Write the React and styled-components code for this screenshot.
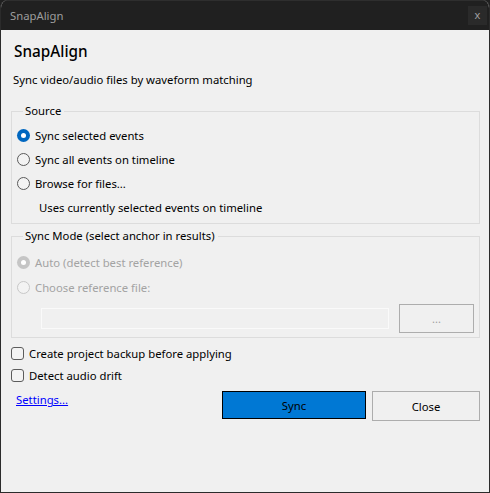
import React from 'react'
import styled, {createGlobalStyle} from 'styled-components'

const Global = createGlobalStyle`
    html, body {
        margin: 0;
        padding: 0;
        background: #202020;
    }
    * {
        box-sizing: border-box;
    }
`

const font = `"Noto Sans", "Open Sans", sans-serif`

const Window = styled.div`
    width: 490px;
    height: 493px;
    display: flex;
    flex-direction: column;
    background: #f0f0f0;
    border: 1px solid #2b2b2b;
    border-top: none;
    border-radius: 8px 8px 0 0;
    overflow: hidden;
    font-family: ${font};
    font-size: 11.3px;
    color: #000;
`

const TitleBar = styled.div`
    height: 30px;
    flex: none;
    display: flex;
    align-items: center;
    justify-content: space-between;
    padding: 0 1px 0 9px;
    background: #202020;
    border-top: 1px solid #2e2e2e;
    color: #9d9d9d;
    font-size: 11.3px;
`

const CloseBox = styled.div`
    width: 19px;
    height: 19px;
    margin-right: 1px;
    display: flex;
    align-items: center;
    justify-content: center;
    background: #2a2a2a;
    color: #a0a0a0;
    font-size: 11px;
    line-height: 1;
    padding-bottom: 2px;
`

const Body = styled.div`
    flex: 1;
    display: flex;
    flex-direction: column;
    padding: 0 9px 0 10px;
`

const Heading = styled.h1`
    margin: 11px 0 0 3px;
    font-size: 15.3px;
    line-height: 20px;
    font-weight: 500;
`

const Subtitle = styled.p`
    margin: 11px 0 0 2px;
    line-height: 16px;
`

const Group = styled.fieldset`
    margin: ${({top}) => top}px 0 0;
    padding: ${({pad}) => pad};
    min-width: 0;
    border: 1px solid #dcdcdc;
    display: flex;
    flex-direction: column;
`

const Legend = styled.legend`
    margin-left: 6px;
    padding: 0 3px 0 2px;
    line-height: 16px;
`

const Option = styled.label`
    height: ${({h}) => h || 24}px;
    display: flex;
    align-items: center;
    gap: 5px;
    color: ${({disabled}) => disabled ? '#a3a3a3' : '#000'};
`

const Radio = styled.span`
    width: 13px;
    height: 13px;
    flex: none;
    border-radius: 50%;
    display: flex;
    align-items: center;
    justify-content: center;
    border: ${({checked, disabled}) =>
        checked ? 'none' : `1px solid ${disabled ? '#c8c8c8' : '#5a5a5a'}`};
    background: ${({checked, disabled}) =>
        checked ? (disabled ? '#c5c5c5' : '#0067c0') : '#f3f3f3'};

    &::after {
        content: '';
        display: ${({checked}) => checked ? 'block' : 'none'};
        width: 5px;
        height: 5px;
        border-radius: 50%;
        background: #fff;
    }
`

const Hint = styled.div`
    margin: 5px 0 0 22px;
    line-height: 16px;
`

const BrowseRow = styled.div`
    margin-top: 4px;
    display: flex;
    align-items: center;
    gap: 10px;
`

const PathField = styled.div`
    flex: 1;
    height: 21px;
    margin-left: 24px;
    border: 1px solid #fafafa;
    background: #f0f0f0;
`

const BrowseButton = styled.div`
    width: 75px;
    height: 29px;
    display: flex;
    align-items: center;
    justify-content: center;
    border: 1px solid #adadad;
    color: #a0a0a0;
    font-size: 11px;
`

const Checks = styled.div`
    margin-top: 4px;
    display: flex;
    flex-direction: column;
`

const CheckRow = styled.label`
    height: 22px;
    display: flex;
    align-items: center;
    gap: 5px;
`

const Checkbox = styled.span`
    width: 13px;
    height: 13px;
    flex: none;
    border: 1px solid #5c5c5c;
    border-radius: 3px;
    background: #f3f3f3;
`

const Footer = styled.div`
    margin-top: 5px;
    display: flex;
    align-items: flex-start;
`

const Link = styled.a`
    margin: 1px 0 0 5px;
    line-height: 16px;
    color: #0000ff;
    text-decoration: underline;
    cursor: pointer;
`

const Actions = styled.div`
    margin-left: auto;
    display: flex;
    gap: 6px;
`

const Button = styled.button`
    width: ${({w}) => w}px;
    height: ${({h}) => h}px;
    padding: 0;
    font-family: ${font};
    font-size: 11.3px;
    color: #000;
    background: ${({primary}) => primary ? '#0078d4' : '#f0f0f0'};
    border: 1px solid ${({primary}) => primary ? '#000' : '#adadad'};
`

export default function App() {
    return (
        <>
            <Global/>
            <Window>
                <TitleBar>
                    <span>SnapAlign</span>
                    <CloseBox>x</CloseBox>
                </TitleBar>
                <Body>
                    <Heading>SnapAlign</Heading>
                    <Subtitle>Sync video/audio files by waveform matching</Subtitle>

                    <Group top={15} pad="4px 4px 7px 5px">
                        <Legend>Source</Legend>
                        <Option><Radio checked/>Sync selected events</Option>
                        <Option><Radio/>Sync all events on timeline</Option>
                        <Option><Radio/>Browse for files...</Option>
                        <Hint>Uses currently selected events on timeline</Hint>
                    </Group>

                    <Group top={4} pad="6px 5px 4px 5px">
                        <Legend>Sync Mode (select anchor in results)</Legend>
                        <Option disabled h={25}><Radio checked disabled/>Auto (detect best reference)</Option>
                        <Option disabled h={25}><Radio disabled/>Choose reference file:</Option>
                        <BrowseRow>
                            <PathField/>
                            <BrowseButton>...</BrowseButton>
                        </BrowseRow>
                    </Group>

                    <Checks>
                        <CheckRow><Checkbox/>Create project backup before applying</CheckRow>
                        <CheckRow><Checkbox/>Detect audio drift</CheckRow>
                    </Checks>

                    <Footer>
                        <Link>Settings...</Link>
                        <Actions>
                            <Button primary w={144} h={28}>Sync</Button>
                            <Button w={108} h={30}>Close</Button>
                        </Actions>
                    </Footer>
                </Body>
            </Window>
        </>
    )
}
